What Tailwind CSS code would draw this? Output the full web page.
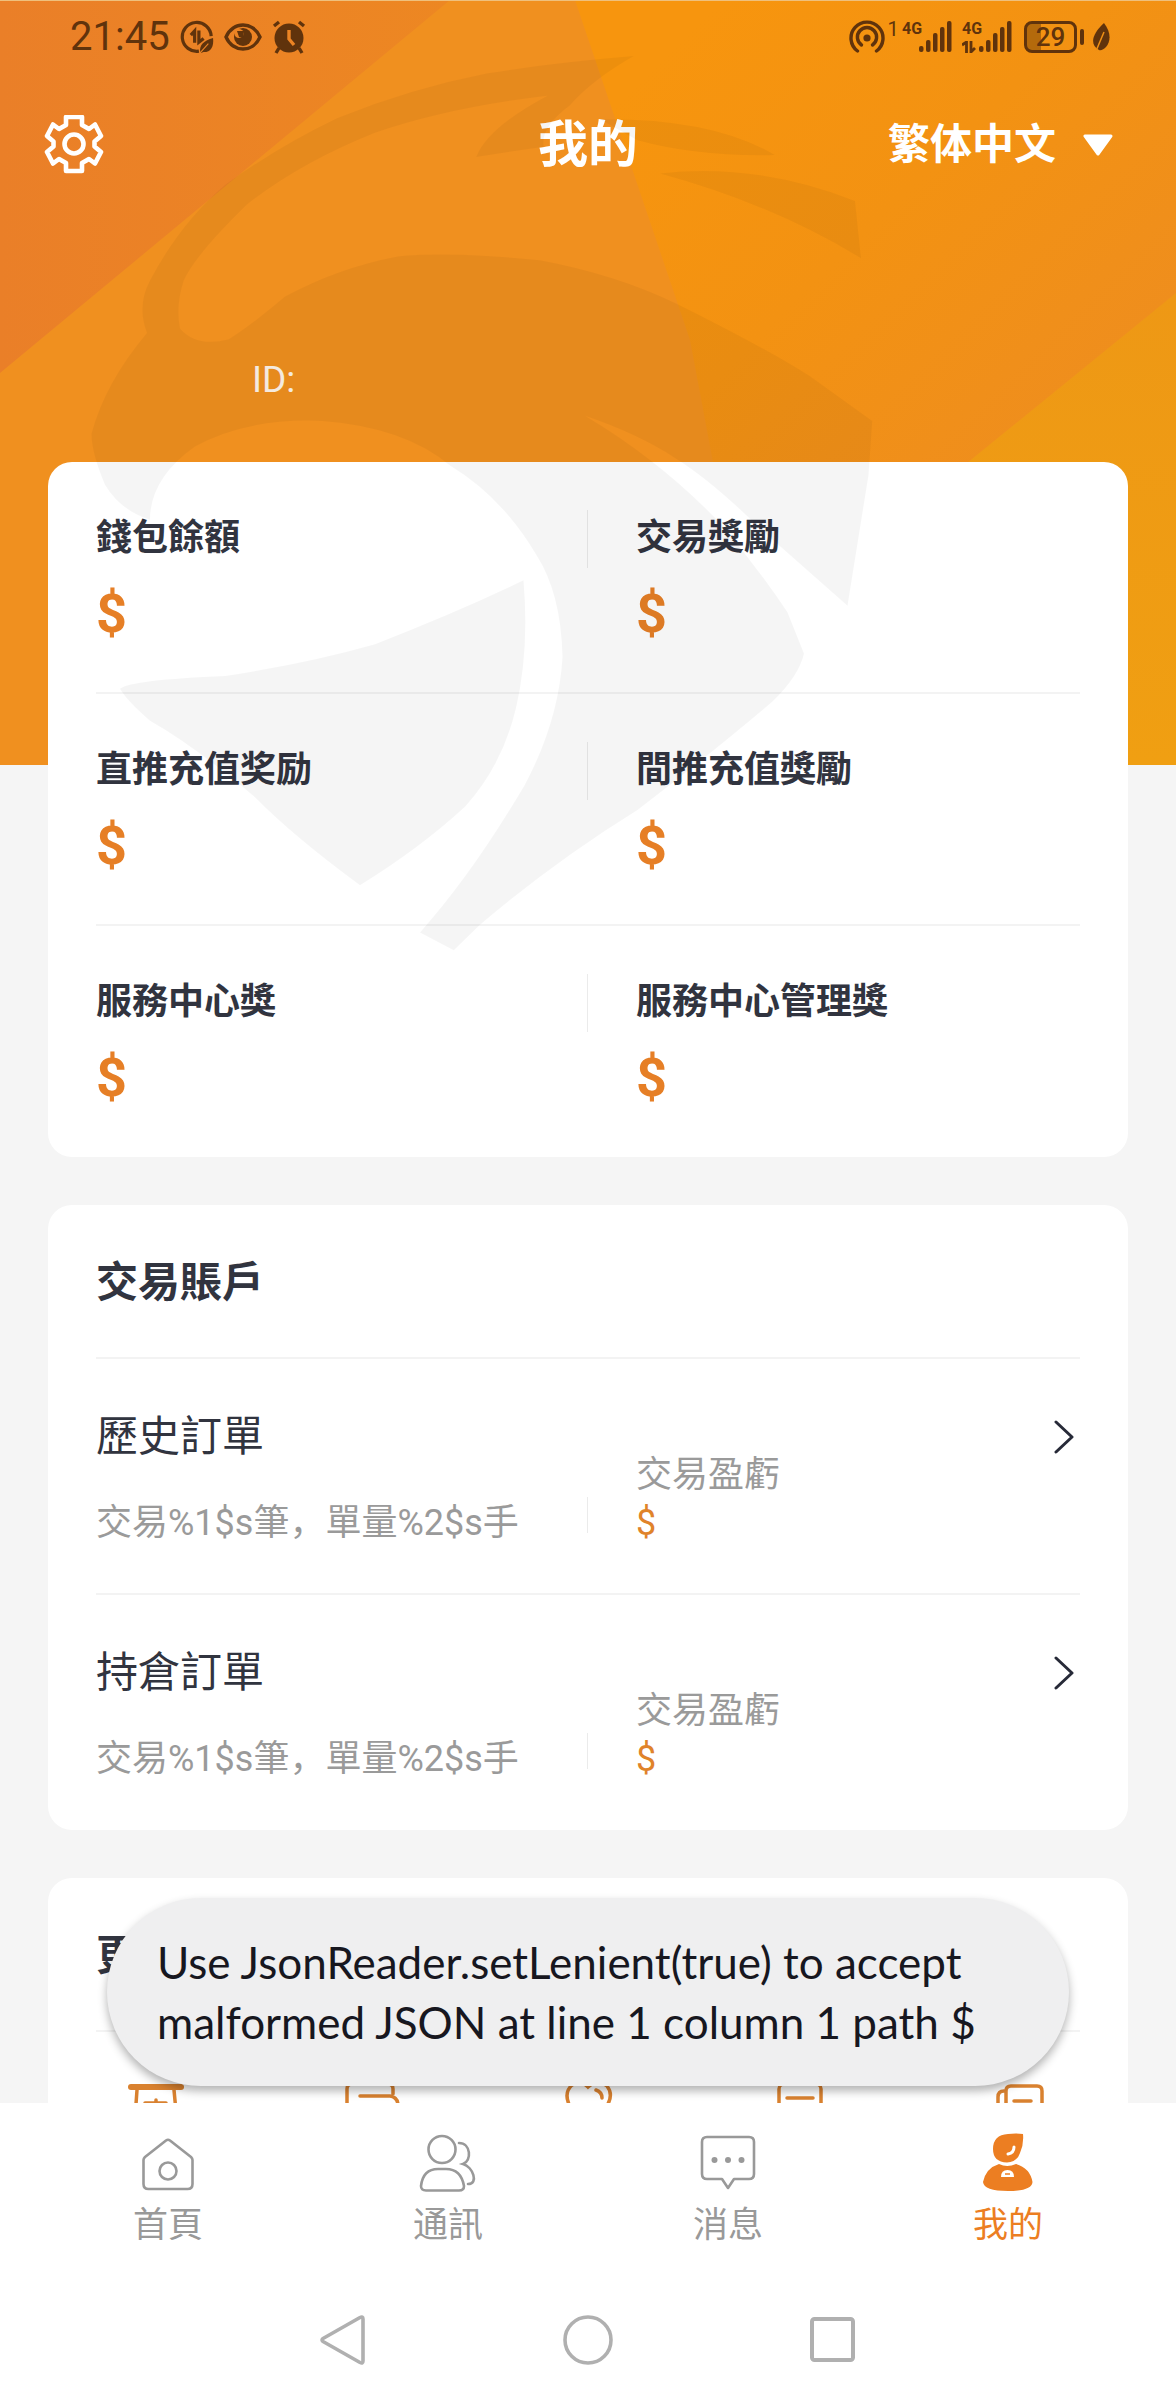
<!DOCTYPE html>
<html lang="zh-Hans">
<head>
<meta charset="utf-8">
<meta name="viewport" content="width=device-width, initial-scale=1">
<title>我的</title>
<script src="https://cdn.jsdelivr.net/npm/@tailwindcss/browser@4"></script>
</head>
<body class="flex h-screen flex-col overflow-hidden bg-white font-['Roboto','Noto_Sans_CJK_SC',sans-serif] text-[#31343f]">

<main class="relative flex-1 overflow-hidden bg-[#f5f5f5]">
  <!-- orange backdrop -->
  <svg class="absolute inset-x-0 top-0 h-[765px] w-full" viewBox="0 0 1176 765" preserveAspectRatio="none" aria-hidden="true">
    <defs>
      <linearGradient id="bgLeft" x1="0" y1="0" x2="1" y2="0"><stop offset="0" stop-color="#ea7f28"/><stop offset="1" stop-color="#ed8722"/></linearGradient>
      <linearGradient id="bgRight" gradientUnits="userSpaceOnUse" x1="640" y1="80" x2="1010" y2="460"><stop offset="0" stop-color="#f7950e"/><stop offset=".5" stop-color="#f39212"/><stop offset="1" stop-color="#ef8e1d"/></linearGradient>
      <linearGradient id="bgCorner" x1="0" y1="0" x2="0" y2="1"><stop offset="0" stop-color="#ee9815"/><stop offset="1" stop-color="#f09f12"/></linearGradient>
    </defs>
    <path fill="#f0901f" d="M0 0H1176V765H0z"/>
    <path fill="url(#bgLeft)" d="M0 0H450L0 373z"/>
    <path fill="url(#bgRight)" d="M575 0H1176V765H770L690 340z"/>
    <path fill="url(#bgCorner)" d="M1176 293V765H596z"/>
  </svg>

  <div class="relative flex h-[72px] items-center justify-between border-t border-[#efc07c] pl-[70px] pr-[66px] text-[#60330c]">
    <div class="flex items-center gap-[10px]">
      <span class="text-[40px] leading-none">21:45</span>
      <svg class="size-[34px]" viewBox="0 0 36 36" fill="none" stroke="currentColor" stroke-width="3.4" aria-hidden="true"><path d="M20 33A15.3 15.3 0 1 1 33 17"/><path d="M11.500 16 15.500 11.500V24M20 11V23.500L25 19.500"/><path fill="currentColor" stroke="none" d="M35 19c1 9-2 15-10 15l-3 1-.6-1c-1-8 4-12 13.600-15z"/><path stroke="#ec8424" stroke-width="1.200" d="m21 35 9-10"/></svg>
      <svg class="h-[30px] w-[38px]" viewBox="0 0 38 30" fill="none" stroke="currentColor" stroke-width="3.400" aria-hidden="true"><path d="M2 15C9-1 29-1 36 15 29 31 9 31 2 15z"/><circle cx="19" cy="15" r="9" fill="currentColor" stroke="none"/><circle cx="15" cy="11.500" r="4.600" fill="#ec8424" stroke="none"/><path fill="currentColor" stroke="none" d="m13 9 7 0-1 7-4-1z"/></svg>
      <svg class="size-[34px]" viewBox="0 0 34 34" fill="none" stroke="currentColor" stroke-width="3.400" aria-hidden="true"><circle cx="17" cy="18" r="14.500" fill="currentColor" stroke="none"/><path d="M2 6 7 2M32 6 27 2M7 28 4 33M27 28 30 33"/><path stroke="#ec8424" d="M17 10V19L22 25"/></svg>
    </div>
    <div class="flex items-center">
      <svg class="size-[36px]" viewBox="0 0 36 36" fill="none" stroke="currentColor" stroke-width="3.400" stroke-linecap="round" aria-hidden="true"><path d="M8.500 32A16 16 0 1 1 27.500 32"/><path d="M12.500 26A9.600 9.600 0 1 1 23.500 26"/><circle cx="18" cy="19" r="3.600" fill="currentColor" stroke="none"/></svg>
      <span class="mb-4 w-4 text-center text-xl leading-none">1</span>
      <span class="mb-4 ml-px w-[17px] text-base font-bold leading-none">4G</span>
      <svg class="h-[31px] w-[33px]" viewBox="0 0 33 31" fill="currentColor" aria-hidden="true"><rect y="25" width="4.500" height="6" rx="2"/><rect x="7" y="19" width="4.500" height="12" rx="2"/><rect x="14" y="12" width="4.500" height="19" rx="2"/><rect x="21" y="6" width="4.500" height="25" rx="2"/><rect x="28" width="4.500" height="31" rx="2"/></svg>
      <span class="ml-[10px] flex h-[32px] w-[17px] flex-col justify-between">
        <span class="text-base font-bold leading-none">4G</span>
        <svg class="h-[12px] w-[14px]" viewBox="0 0 14 12" fill="none" stroke="currentColor" stroke-width="2.800" aria-hidden="true"><path d="M0 4 4.500 1V12M9 0V11L13 7"/></svg>
      </span>
      <svg class="h-[31px] w-[33px]" viewBox="0 0 33 31" fill="currentColor" aria-hidden="true"><rect y="25" width="4.500" height="6" rx="2"/><rect x="7" y="19" width="4.500" height="12" rx="2"/><rect x="14" y="12" width="4.500" height="19" rx="2"/><rect x="21" y="6" width="4.500" height="25" rx="2"/><rect x="28" width="4.500" height="31" rx="2"/></svg>
      <span class="ml-3 flex h-[32px] w-[53px] items-center justify-center rounded-lg border-3 border-current bg-linear-to-r from-[#b46a0c] from-30% to-transparent to-30% text-[26px] font-medium leading-none">29</span>
      <span class="ml-[3px] h-4 w-1 rounded-full bg-current"></span>
      <svg class="ml-2 h-[28px] w-[18px]" viewBox="0 0 18 28" aria-hidden="true"><path fill="currentColor" d="M12 0C19 9 19 18 14 24c-2 2-5 4-7 3-9-5-8-15 5-27z"/><path stroke="#ef9015" stroke-width="1.500" d="M4 28 12 9"/></svg>
    </div>
  </div>

  <header class="relative grid h-[146px] grid-cols-3 items-center px-[44px] text-white">
    <button type="button" aria-label="設置" class="justify-self-start">
      <svg class="h-[60px] w-[60px]" viewBox="0 0 60 60" fill="none" stroke="currentColor" stroke-width="4.600" stroke-linejoin="round" aria-hidden="true"><path d="M22 2H38V10L45 14 51 9.500 57 21 50.500 26.500V31.500L57 37 51 48.500 45 44 38 48V56H22V48L15 44 9 48.500 3 37 9.500 31.500V26.500L3 21 9 9.500 15 14 22 10z"/><circle cx="30" cy="29" r="9.500"/></svg>
    </button>
    <h1 class="justify-self-center text-[50px] font-bold leading-none">我的</h1>
    <label class="flex items-center gap-[26px] justify-self-end pr-[19px]">
      <select aria-label="語言" class="appearance-none text-[42px] font-bold leading-[60px] outline-none"><option>繁体中文</option></select>
      <svg class="h-[22px] w-[30px]" viewBox="0 0 30 22" fill="currentColor" stroke="currentColor" stroke-width="3" stroke-linejoin="round" aria-hidden="true"><path d="M2 2H28L15 20z"/></svg>
    </label>
  </header>

  <p class="relative mt-[136px] pl-[252px] text-[37px] leading-[52px] text-white/90">ID:</p>

  <div class="relative mx-[48px] mt-[56px] flex flex-col gap-[48px]">
    <section class="rounded-3xl bg-white px-[48px]">
      <div class="relative grid h-[232px] grid-cols-2 border-b-2 border-[#f3f3f3]">
        <div class="relative flex flex-col gap-[20px] pt-[52px] after:absolute after:right-0 after:top-[48px] after:h-[58px] after:w-px after:bg-[#ebebeb]"><h2 class="text-[36px] font-bold leading-[48px]">錢包餘額</h2><span class="text-[54px] font-bold leading-[64px] text-[#e67f26]">$</span></div>
        <div class="flex flex-col gap-[20px] pl-[48px] pt-[52px]"><h2 class="text-[36px] font-bold leading-[48px]">交易獎勵</h2><span class="text-[54px] font-bold leading-[64px] text-[#e67f26]">$</span></div>
      </div>
      <div class="relative grid h-[232px] grid-cols-2 border-b-2 border-[#f3f3f3]">
        <div class="relative flex flex-col gap-[20px] pt-[52px] after:absolute after:right-0 after:top-[48px] after:h-[58px] after:w-px after:bg-[#ebebeb]"><h2 class="text-[36px] font-bold leading-[48px]">直推充值奖励</h2><span class="text-[54px] font-bold leading-[64px] text-[#e67f26]">$</span></div>
        <div class="flex flex-col gap-[20px] pl-[48px] pt-[52px]"><h2 class="text-[36px] font-bold leading-[48px]">間推充值獎勵</h2><span class="text-[54px] font-bold leading-[64px] text-[#e67f26]">$</span></div>
      </div>
      <div class="relative grid h-[231px] grid-cols-2">
        <div class="relative flex flex-col gap-[20px] pt-[52px] after:absolute after:right-0 after:top-[48px] after:h-[58px] after:w-px after:bg-[#ebebeb]"><h2 class="text-[36px] font-bold leading-[48px]">服務中心獎</h2><span class="text-[54px] font-bold leading-[64px] text-[#e67f26]">$</span></div>
        <div class="flex flex-col gap-[20px] pl-[48px] pt-[52px]"><h2 class="text-[36px] font-bold leading-[48px]">服務中心管理獎</h2><span class="text-[54px] font-bold leading-[64px] text-[#e67f26]">$</span></div>
      </div>
    </section>

    <section class="rounded-3xl bg-white px-[48px]">
      <h2 class="flex h-[154px] items-center border-b-2 border-[#f3f3f3] pt-1 text-[42px] font-bold leading-none">交易賬戶</h2>
      <a href="#history" class="relative grid h-[236px] grid-cols-2 border-b-2 border-[#f3f3f3]">
        <span class="relative flex flex-col gap-[34px] pt-[50px] after:absolute after:right-0 after:top-[138px] after:h-[36px] after:w-px after:bg-[#ebebeb]"><span class="text-[42px] leading-[56px]">歷史訂單</span><span class="text-[36px] leading-[48px] text-[#9a9a9a]">交易%1$s筆，單量%2$s手</span></span>
        <span class="flex flex-col pl-[48px] pt-[92px] text-[36px] leading-[48px] text-[#9a9a9a]"><span>交易盈虧</span><span class="text-[#e0832a]">$</span></span>
        <svg class="absolute right-[6px] top-[61px] h-[34px] w-[20px]" viewBox="0 0 20 34" fill="none" stroke="#272a38" stroke-width="3" stroke-linecap="round" stroke-linejoin="round" aria-hidden="true"><path d="M2 2 18 17 2 32"/></svg>
      </a>
      <a href="#positions" class="relative grid h-[235px] grid-cols-2">
        <span class="relative flex flex-col gap-[34px] pt-[50px] after:absolute after:right-0 after:top-[138px] after:h-[36px] after:w-px after:bg-[#ebebeb]"><span class="text-[42px] leading-[56px]">持倉訂單</span><span class="text-[36px] leading-[48px] text-[#9a9a9a]">交易%1$s筆，單量%2$s手</span></span>
        <span class="flex flex-col pl-[48px] pt-[92px] text-[36px] leading-[48px] text-[#9a9a9a]"><span>交易盈虧</span><span class="text-[#e0832a]">$</span></span>
        <svg class="absolute right-[6px] top-[61px] h-[34px] w-[20px]" viewBox="0 0 20 34" fill="none" stroke="#272a38" stroke-width="3" stroke-linecap="round" stroke-linejoin="round" aria-hidden="true"><path d="M2 2 18 17 2 32"/></svg>
      </a>
    </section>

    <section class="h-[400px] rounded-3xl bg-white">
      <h2 class="mx-[48px] flex h-[154px] items-center border-b-2 border-[#f3f3f3] pt-1 text-[42px] font-bold leading-none">更多</h2>
      <div class="grid grid-cols-5 justify-items-center pt-[50px] text-[#d9812f]">
        <svg class="size-[56px]" viewBox="0 0 56 56" fill="none" stroke="currentColor" stroke-width="4" stroke-linecap="round" aria-hidden="true"><path d="M3 5H53" stroke-width="6"/><path d="M9 8 6 50M46 8 50 50M17 21H38M28 18V40" stroke-width="3.500"/></svg>
        <svg class="size-[56px]" viewBox="0 0 56 56" fill="none" stroke="currentColor" stroke-width="3.500" stroke-linecap="round" aria-hidden="true"><path d="M3 50V7Q3 2 8 2H44Q49 2 49 7V12M16 14H46Q54 15 54 24V50H3"/></svg>
        <svg class="size-[56px]" viewBox="0 0 56 56" fill="none" stroke="currentColor" stroke-width="3.500" stroke-linecap="round" aria-hidden="true"><path d="M28 50 12 28Q2 12 12 3 20-3 28 5 38-4 47 4 55 14 44 28zM36 8Q42 10 42 16"/></svg>
        <svg class="size-[56px]" viewBox="0 0 56 56" fill="none" stroke="currentColor" stroke-width="3.500" stroke-linecap="round" aria-hidden="true"><rect x="3" y="2" width="42" height="50" rx="5"/><path d="M11 16H37"/></svg>
        <svg class="size-[56px]" viewBox="0 0 56 56" fill="none" stroke="currentColor" stroke-width="3.500" stroke-linecap="round" aria-hidden="true"><path d="M14 50V9Q14 4 19 4H45Q50 4 50 9V50zM12 9Q6 9 6 15V50H14M22 19H39"/></svg>
      </div>
    </section>
  </div>

  <!-- helmet watermark lying over the backdrop and the cards -->
  <svg class="pointer-events-none absolute inset-x-0 top-0 h-[1000px] w-full" viewBox="0 0 1568 1568" preserveAspectRatio="none" fill="#000" fill-opacity=".04" aria-hidden="true">
    <path d="M196 522Q182 480 200 440 240 350 300 290 370 230 450 185 550 138 650 115 740 98 845 88 790 125 760 165 720 200 725 230L635 246Q650 200 730 150 600 168 500 208 400 255 330 320 260 400 245 440 234 480 240 515 262 545 305 532 335 510 380 465 450 420 530 402 600 394 720 408 820 430 900 475 1020 545 1080 590L1163 660 1158 745 1130 950 1010 825Q950 755 900 718 850 680 780 652 880 722 960 820 1010 890 1050 960L1072 1025Q1065 1060 1030 1100 950 1180 850 1270 740 1350 640 1450L605 1490 560 1462Q630 1370 700 1230 745 1130 750 1030 748 930 715 870 670 780 600 730 540 670 430 660 330 655 260 700 200 750 200 815 160 800 140 760 122 710 122 680 140 600 196 522z"/>
    <path d="M698 910Q706 1020 688 1110 670 1200 620 1265 560 1330 480 1388 390 1310 340 1250 260 1170 200 1130 170 1100 160 1080 175 1066 300 1060 410 1040 500 1010 610 960 698 910z"/>
    <path d="M800 187Q950 185 1033 243 930 246 850 220zM880 272Q1010 255 1140 315L1148 405Q1030 320 880 272z"/>
  </svg>

  <div role="status" class="absolute inset-x-[107px] bottom-[17px] rounded-[94px] bg-[#efeff0] px-[50px] py-[34px] font-[Lato,sans-serif] text-[44px] leading-[60px] text-[#17171f] shadow-[0_5px_10px_rgba(0,0,0,0.3)]">Use JsonReader.setLenient(true) to accept<br>malformed JSON at line 1 column 1 path $</div>
</main>

<nav class="grid h-[164px] shrink-0 grid-cols-4 px-[28px] pt-[29px] text-[35px] leading-[52px] text-[#999]">
  <a href="#home" class="flex flex-col items-center gap-[8px]">
    <svg class="size-[60px]" viewBox="0 0 60 60" fill="none" stroke="currentColor" stroke-width="2.600" stroke-linejoin="round" aria-hidden="true"><path d="M28 8.500Q30 7 32 8.500L53 25Q54.500 26.500 54.500 28V52Q54.500 57 49.500 57H10.500Q5.500 57 5.500 52V28Q5.500 26.500 7 25z"/><circle cx="30" cy="39" r="8.500"/></svg>
    首頁</a>
  <a href="#contacts" class="flex flex-col items-center gap-[8px]">
    <svg class="size-[60px]" viewBox="0 0 60 60" fill="none" stroke="currentColor" stroke-width="2.600" stroke-linecap="round" aria-hidden="true"><circle cx="24" cy="17.500" r="13.500"/><path d="M3 54Q5 37 20 37H28Q43 37 46 54 46 58.500 41 58.500H8Q3 58.500 3 54zM41 11C53 11 54 29 45 32 55 35 61 52 50 52"/></svg>
    通訊</a>
  <a href="#messages" class="flex flex-col items-center gap-[8px]">
    <svg class="size-[60px]" viewBox="0 0 60 60" fill="none" stroke="currentColor" stroke-width="2.600" stroke-linejoin="round" aria-hidden="true"><path d="M9 5H51Q56 5 56 10V42Q56 47 51 47H36L30 56 24 47H9Q4 47 4 42V10Q4 5 9 5z"/><g fill="currentColor" stroke="none"><circle cx="16.500" cy="28" r="3"/><circle cx="30" cy="28" r="3"/><circle cx="43.500" cy="28" r="3"/></g></svg>
    消息</a>
  <a href="#me" aria-current="page" class="flex flex-col items-center gap-[8px] text-[#ec7e22]">
    <svg class="size-[60px]" viewBox="0 0 60 60" fill="currentColor" aria-hidden="true"><path d="M45 2Q46 12 42 21 39 30 29 30.500 15 30 15 17 15 3 30 2 38 1 45 2z"/><path d="M21 32Q29 36 38 32 52 36 54.500 50 54 59 30 59 6 59 5 50 8 36 21 32z"/><path fill="none" stroke="#fff" stroke-width="3" stroke-linecap="round" d="M36 15Q36 21 30 22"/><path fill="#fff" d="M23 45Q23 38 29.500 38 36 38 36 45z"/><path stroke="#ec7e22" stroke-width="1.500" d="M27 42H32"/></svg>
    我的</a>
</nav>

<div class="flex h-[133px] shrink-0 items-center justify-center gap-[195px] pt-[12px] text-[#b0b0b0]">
  <button type="button" aria-label="返回"><svg class="size-[50px]" viewBox="0 0 50 50" fill="none" stroke="currentColor" stroke-width="3.600" stroke-linejoin="round" aria-hidden="true"><path d="M5 23.500 42 2.500Q45 1 45 4V46Q45 49 42 47.500L5 26.500Q3 25 5 23.500z"/></svg></button>
  <button type="button" aria-label="主頁"><svg class="size-[50px]" viewBox="0 0 50 50" fill="none" stroke="currentColor" stroke-width="3.600" aria-hidden="true"><circle cx="25" cy="25" r="23"/></svg></button>
  <button type="button" aria-label="最近"><svg class="size-[50px]" viewBox="0 0 50 50" fill="none" stroke="currentColor" stroke-width="4" aria-hidden="true"><rect x="4" y="4" width="41" height="41" rx="2.500"/></svg></button>
</div>
</body>
</html>
